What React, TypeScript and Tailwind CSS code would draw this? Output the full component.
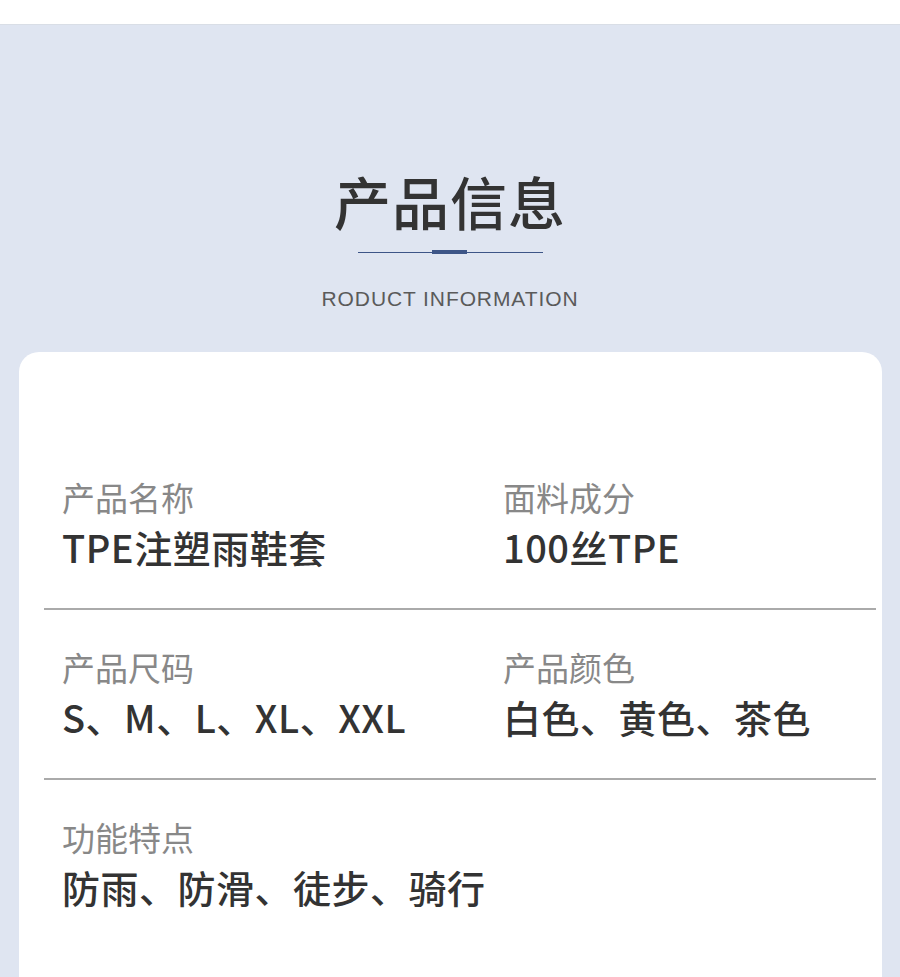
const rows = [
  [
    { label: '产品名称', value: 'TPE注塑雨鞋套' },
    { label: '面料成分', value: '100丝TPE' },
  ],
  [
    { label: '产品尺码', value: 'S、M、L、XL、XXL' },
    { label: '产品颜色', value: '白色、黄色、茶色' },
  ],
  [{ label: '功能特点', value: '防雨、防滑、徒步、骑行' }],
];

const cjk = "font-['Noto_Sans_CJK_SC','Noto_Sans',sans-serif]";

export default function App() {
  return (
    <div className={`w-[900px] h-[977px] overflow-hidden bg-[#dfe5f1] ${cjk}`}>
      <div className="h-[25px] bg-white border-b border-[#d9dee6]"></div>

      {/* 标题 */}
      <div className="flex flex-col items-center pt-[146px]">
        <h1 className="text-[57px] leading-[58px] font-medium text-[#333333] tracking-[1px]">产品信息</h1>
        <div className="mt-[21px] flex items-center h-[4px]">
          <div className="w-[74px] h-px bg-[#3d5587]"></div>
          <div className="w-[35px] h-[4px] bg-[#3d5587]"></div>
          <div className="w-[76px] h-px bg-[#3d5587]"></div>
        </div>
        <p className="mt-[33px] text-[21px] leading-[24px] font-['Liberation_Sans',sans-serif] text-[#5a5a5a] tracking-[0.9px]">
          RODUCT INFORMATION
        </p>
      </div>

      {/* 参数卡片 */}
      <div className="mt-[41px] ml-[19px] w-[863px] h-[700px] bg-white rounded-t-[20px] pt-[125px]">
        {rows.map((row, i) => (
          <div
            key={i}
            className={`ml-[25px] mr-[6px] pl-[18px] grid grid-cols-[441px_1fr] ${
              i < rows.length - 1 ? 'border-b-2 border-[#aaaaaa] pb-[39px] mb-[37px]' : ''
            }`}
          >
            {row.map((item) => (
              <div key={item.label} className="flex flex-col gap-[8px]">
                <span className="text-[33px] leading-[40px] text-[#888888]">{item.label}</span>
                <span className="text-[38px] leading-[44px] font-medium text-[#333333] tracking-[0.5px]">{item.value}</span>
              </div>
            ))}
          </div>
        ))}
      </div>
    </div>
  );
}
